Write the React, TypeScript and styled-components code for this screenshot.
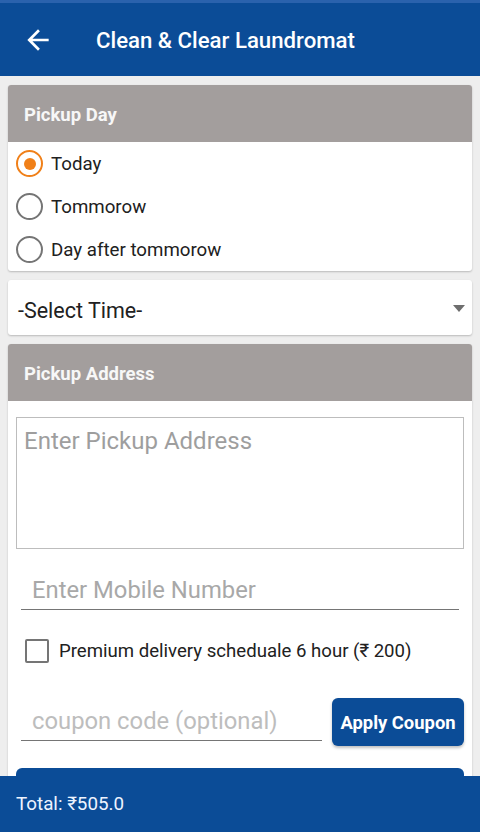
import React, { useState } from 'react';
import styled, { createGlobalStyle } from 'styled-components';

const GlobalStyle = createGlobalStyle`
  html, body {
    margin: 0;
    padding: 0;
    background: #eeeeee;
    font-family: Roboto, "Noto Sans", "Liberation Sans", sans-serif;
  }
  * { box-sizing: border-box; }
`;

const Page = styled.div`
  width: 480px;
  height: 832px;
  display: flex;
  flex-direction: column;
  overflow: hidden;
  background: #eeeeee;
`;

const AppBar = styled.div`
  flex: none;
  height: 76px;
  background: #0b4c97;
  border-top: 3px solid #2a62ad;
  display: flex;
  align-items: center;
  padding: 0 0 0 22px;
  gap: 42px;
  color: #ffffff;
`;

const Title = styled.h1`
  margin: 0;
  font-size: 22.2px;
  font-weight: 500;
  color: #ffffff;
`;

const Content = styled.div`
  flex: 1;
  overflow: hidden;
  display: flex;
  flex-direction: column;
  gap: 9px;
  padding: 9px 8px 0;
`;

const Card = styled.div<{ $grow?: boolean }>`
  flex: ${p => (p.$grow ? '1 0 auto' : 'none')};
  background: #ffffff;
  border-radius: 3px;
  box-shadow: 0 1px 2px rgba(0, 0, 0, 0.22);
  overflow: hidden;
`;

const CardHeader = styled.div`
  height: 57px;
  background: #a39e9d;
  display: flex;
  align-items: center;
  padding: 2px 0 0 16px;
  font-size: 18.5px;
  font-weight: 700;
  color: #f7f7f7;
`;

const RadioList = styled.div`
  display: flex;
  flex-direction: column;
  padding: 0 0 0 8px;
`;

const RadioRow = styled.label`
  height: 43px;
  display: flex;
  align-items: center;
  gap: 8px;
  font-size: 18.7px;
  color: #212121;
  cursor: pointer;
`;

const RadioCircle = styled.span<{ $checked: boolean }>`
  width: 27px;
  height: 27px;
  border-radius: 50%;
  border: 2.5px solid ${p => (p.$checked ? '#f08019' : '#757575')};
  display: flex;
  align-items: center;
  justify-content: center;

  &::after {
    content: '';
    width: 12px;
    height: 12px;
    border-radius: 50%;
    background: ${p => (p.$checked ? '#f08019' : 'transparent')};
  }
`;

const SelectCard = styled(Card)`
  height: 55px;
  display: flex;
  align-items: center;
  justify-content: space-between;
  padding: 6px 7px 0 10px;
  font-size: 21.5px;
  color: #212121;
`;

const DropArrow = styled.span`
  width: 0;
  height: 0;
  border-left: 6px solid transparent;
  border-right: 6px solid transparent;
  border-top: 7px solid #6e6e6e;
  margin-bottom: 5px;
`;

const FormBody = styled.div`
  display: flex;
  flex-direction: column;
  padding: 16px 8px 0;
`;

const AddressBox = styled.textarea`
  width: 100%;
  height: 132px;
  border: 1px solid #bdbdbd;
  border-radius: 0;
  resize: none;
  padding: 9px 7px;
  font-family: inherit;
  font-size: 24px;
  color: #212121;
  outline: none;

  &::placeholder {
    color: #9e9e9e;
  }
`;

const LineInput = styled.input<{ $width?: number }>`
  width: ${p => (p.$width ? `${p.$width}px` : '100%')};
  height: 44px;
  border: none;
  border-bottom: 1.5px solid #757575;
  padding: 4px 0 0 11px;
  font-family: inherit;
  font-size: 23.8px;
  color: #212121;
  outline: none;
  background: transparent;

  &::placeholder {
    color: #a8a8a8;
  }
`;

const MobileWrap = styled.div`
  padding: 17px 5px 0;
`;

const CheckRow = styled.label`
  display: flex;
  align-items: center;
  gap: 10px;
  padding: 29px 0 0 9px;
  font-size: 18.6px;
  color: #212121;
`;

const CheckBox = styled.span`
  width: 24px;
  height: 24px;
  border: 2px solid #757575;
  border-radius: 2px;
`;

const CouponRow = styled.div`
  display: flex;
  align-items: flex-start;
  gap: 10px;
  padding: 32px 0 0 5px;
`;

const CouponInput = styled(LineInput)`
  margin-top: 2px;

  &::placeholder {
    color: #bdbdbd;
  }
`;

const ApplyButton = styled.button`
  width: 132px;
  height: 48px;
  margin-top: 3px;
  border: none;
  border-radius: 6px;
  background: #0b4c97;
  color: #ffffff;
  font-family: inherit;
  font-size: 18.4px;
  font-weight: 700;
  box-shadow: 0 2px 3px rgba(0, 0, 0, 0.25);
  padding: 0;
`;

const ProceedButton = styled.div`
  margin-top: 22px;
  height: 48px;
  border-radius: 6px;
  background: #0b4c97;
`;

const Footer = styled.div`
  flex: none;
  height: 56px;
  background: #0b4c97;
  display: flex;
  align-items: center;
  padding-left: 16px;
  font-size: 18.8px;
  color: #eef4ff;
`;

const days = ['Today', 'Tommorow', 'Day after tommorow'];

const BackArrow = () => (
  <svg width="32" height="32" viewBox="0 0 24 24" fill="#ffffff">
    <path d="M20 11H7.83l5.59-5.59L12 4l-8 8 8 8 1.41-1.41L7.83 13H20v-2z" />
  </svg>
);

export default function App() {
  const [day, setDay] = useState(0);
  return (
    <Page>
      <GlobalStyle />
      <AppBar>
        <BackArrow />
        <Title>Clean &amp; Clear Laundromat</Title>
      </AppBar>
      <Content>
        <Card>
          <CardHeader>Pickup Day</CardHeader>
          <RadioList>
            {days.map((d, i) => (
              <RadioRow key={d} onClick={() => setDay(i)}>
                <RadioCircle $checked={day === i} />
                {d}
              </RadioRow>
            ))}
          </RadioList>
        </Card>
        <SelectCard>
          -Select Time-
          <DropArrow />
        </SelectCard>
        <Card $grow>
          <CardHeader>Pickup Address</CardHeader>
          <FormBody>
            <AddressBox placeholder="Enter Pickup Address" />
            <MobileWrap>
              <LineInput placeholder="Enter Mobile Number" />
            </MobileWrap>
            <CheckRow>
              <CheckBox />
              Premium delivery scheduale 6 hour (₹ 200)
            </CheckRow>
            <CouponRow>
              <CouponInput $width={301} placeholder="coupon code (optional)" />
              <ApplyButton>Apply Coupon</ApplyButton>
            </CouponRow>
            <ProceedButton />
          </FormBody>
        </Card>
      </Content>
      <Footer>Total: ₹505.0</Footer>
    </Page>
  );
}
